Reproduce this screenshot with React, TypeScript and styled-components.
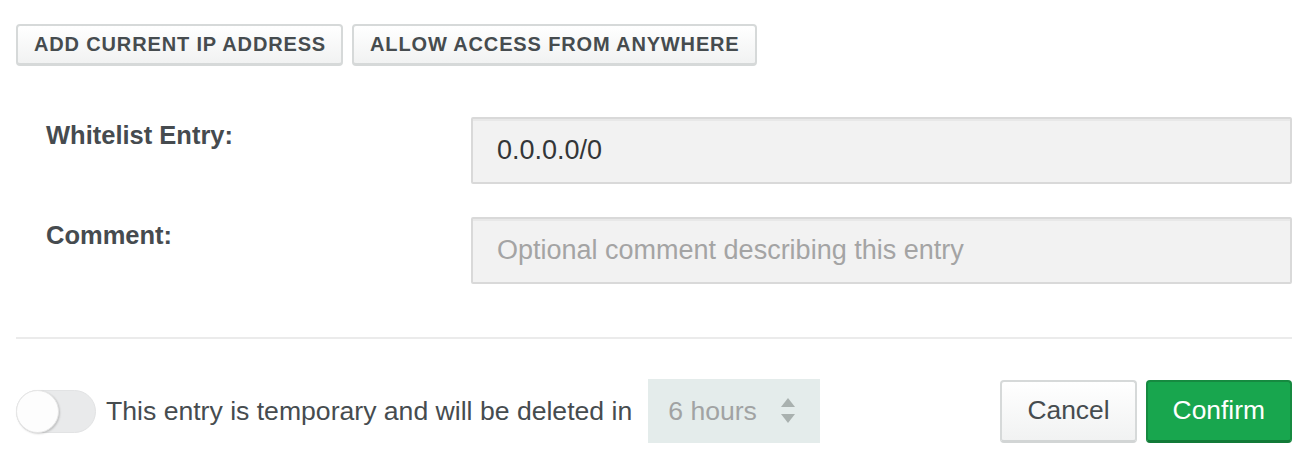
import React from 'react';
import styled, { createGlobalStyle } from 'styled-components';

const GlobalStyle = createGlobalStyle`
    html, body {
        margin: 0;
        padding: 0;
        background: #ffffff;
    }
    body {
        font-family: 'Liberation Sans', Arial, sans-serif;
        color: #464c4f;
    }
`;

const Page = styled.div`
    width: 1308px;
    box-sizing: border-box;
    padding: 24px 16px 0;
`;

const Toolbar = styled.div`
    display: flex;
    gap: 9px;
`;

const QuickButton = styled.button`
    height: 42px;
    box-sizing: border-box;
    padding: 0 15px 0 16px;
    border: 2px solid #d6d9d9;
    border-bottom-width: 3px;
    border-radius: 4px;
    background: linear-gradient(#ffffff, #f1f2f2);
    font-family: 'Liberation Sans', Arial, sans-serif;
    font-weight: 700;
    font-size: 20px;
    letter-spacing: 0.85px;
    color: #464c4f;
    text-transform: uppercase;
    cursor: pointer;
`;

const Form = styled.div`
    display: flex;
    flex-direction: column;
    gap: 33px;
    margin-top: 51px;
`;

const Row = styled.div`
    display: grid;
    grid-template-columns: 455px 1fr;
    align-items: start;
`;

const Label = styled.label`
    padding-left: 30px;
    font-weight: 700;
    font-size: 25.5px;
    line-height: 36px;
    color: #464b4f;
`;

const TextInput = styled.input`
    height: 67px;
    box-sizing: border-box;
    width: 100%;
    padding: 0 24px;
    border: 2px solid #d9d9d9;
    border-radius: 2px;
    background: #f2f2f2;
    box-shadow: inset 0 2px 0 #e8e8e8;
    font-family: 'Liberation Sans', Arial, sans-serif;
    font-size: 27px;
    color: #333638;
    outline: none;

    &::placeholder {
        color: #a4a4a4;
    }
`;

const Divider = styled.hr`
    margin: 53px 0 0;
    border: 0;
    border-top: 2px solid #ebebeb;
`;

const Footer = styled.div`
    display: flex;
    align-items: center;
    margin-top: 40px;
`;

const Temporary = styled.div`
    display: flex;
    align-items: center;
    flex: 1;
    font-size: 26.6px;
    color: #464c4f;
`;

const Switch = styled.span`
    position: relative;
    display: inline-block;
    width: 80px;
    height: 43px;
    box-sizing: border-box;
    border: 1px solid #e2e3e4;
    border-radius: 22px;
    background: #e9eaeb;
    margin-right: 10px;
`;

const Knob = styled.span`
    position: absolute;
    left: -1px;
    top: -1px;
    width: 43px;
    height: 43px;
    border-radius: 50%;
    background: #fdfdfd;
    box-shadow: 1px 1px 2px rgba(0, 0, 0, 0.18);
    border: 1px solid #e6e6e6;
    box-sizing: border-box;
`;

const Duration = styled.div`
    display: flex;
    align-items: center;
    justify-content: space-between;
    width: 172px;
    height: 64px;
    box-sizing: border-box;
    margin-left: 16px;
    padding: 0 25px 0 20px;
    background: #e4eceb;
    font-size: 26.6px;
    color: #a1a3a3;
`;

const Actions = styled.div`
    display: flex;
    gap: 9px;
`;

const ActionButton = styled.button<{ $primary?: boolean }>`
    height: 63px;
    box-sizing: border-box;
    padding: 0 25px;
    border-radius: 4px;
    border: 2px solid ${p => (p.$primary ? '#168a40' : '#d6d9d9')};
    border-bottom-width: 3px;
    border-bottom-color: ${p => (p.$primary ? '#127a38' : '#d2d5d5')};
    background: ${p => (p.$primary ? '#18a64e' : 'linear-gradient(#ffffff, #f1f2f2)')};
    font-family: 'Liberation Sans', Arial, sans-serif;
    font-size: 26.4px;
    color: ${p => (p.$primary ? '#ffffff' : '#464c4f')};
    cursor: pointer;
`;

const Spinner = () => (
    <svg width="14" height="26" viewBox="0 0 14 26">
        <path d="M7 0 L14 9 L0 9 Z" fill="#a9b1af" />
        <path d="M0 16 L14 16 L7 25 Z" fill="#a9b1af" />
    </svg>
);

export default function App() {
    return (
        <Page>
            <GlobalStyle />
            <Toolbar>
                <QuickButton>Add current IP address</QuickButton>
                <QuickButton>Allow access from anywhere</QuickButton>
            </Toolbar>
            <Form>
                <Row>
                    <Label>Whitelist Entry:</Label>
                    <TextInput defaultValue="0.0.0.0/0" />
                </Row>
                <Row>
                    <Label>Comment:</Label>
                    <TextInput placeholder="Optional comment describing this entry" />
                </Row>
            </Form>
            <Divider />
            <Footer>
                <Temporary>
                    <Switch>
                        <Knob />
                    </Switch>
                    This entry is temporary and will be deleted in
                    <Duration>
                        6 hours
                        <Spinner />
                    </Duration>
                </Temporary>
                <Actions>
                    <ActionButton>Cancel</ActionButton>
                    <ActionButton $primary>Confirm</ActionButton>
                </Actions>
            </Footer>
        </Page>
    );
}
